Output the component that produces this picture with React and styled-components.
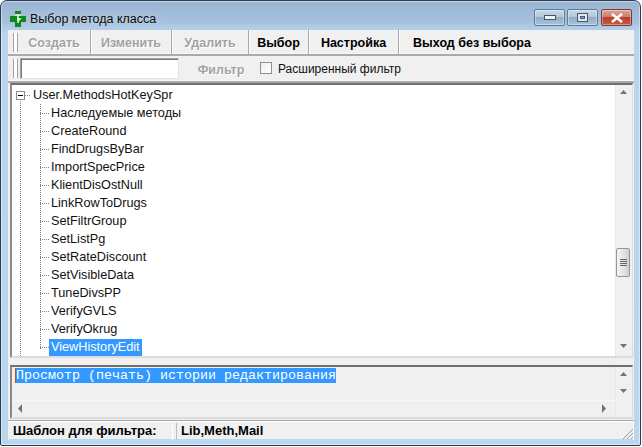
import React from "react";
import styled, { createGlobalStyle } from "styled-components";

const Global = createGlobalStyle`
  html, body { margin: 0; padding: 0; width: 642px; height: 447px; overflow: hidden; background: #fff; }
  #root { width: 642px; height: 447px; }
`;
const UI = `"Liberation Sans", Arial, sans-serif`;

const Win = styled.div`
  box-sizing: border-box; width: 641px; height: 446px; display: flex; flex-direction: column;
  border: 1px solid #2b3c4d; border-radius: 7px 7px 2px 2px;
  background: linear-gradient(180deg, #9ab5d2 0px, #a5c0dc 20px, #b9d4ec 32px, #b9d7ee 100%);
  padding: 0 6px 6px 7px; box-shadow: inset 0 0 0 1px rgba(255,255,255,.45);
  font-family: ${UI}; color: #000;
`;
const TitleBar = styled.div`
  height: 29px; flex: none; display: flex; align-items: center; padding-top: 7px; box-sizing: border-box; padding-left: 2px;
`;
const TitleText = styled.div`
  font-size: 12.5px; margin-left: 4px; flex: 1; color: #0b0b0b; text-shadow: 0 0 6px rgba(255,255,255,.6);
`;
const Ctl = styled.div`
  box-sizing: border-box; width: 31px; height: 17px; flex: none; margin-right: ${p => p.$mr}px; margin-top: -3px;
  display: flex; align-items: center; justify-content: center; border-radius: 2px;
  border: 1px solid ${p => p.$close ? "#7d3a3a" : "#5f7b96"};
  background: ${p => p.$close
    ? "linear-gradient(180deg,#e0a598 0,#cf7d6c 45%,#b8402c 50%,#c75a45 100%)"
    : "linear-gradient(180deg,#c8d8e8 0,#b2c8dc 45%,#8fadc9 50%,#a9c4dc 100%)"};
  box-shadow: inset 0 0 0 1px rgba(255,255,255,.35);
`;
const Content = styled.div`
  flex: 1; min-height: 0; display: flex; flex-direction: column; background: #f0f0f0;
`;
const Bar = styled.div`
  height: ${p => p.$h}px; flex: none; box-sizing: border-box; display: flex; align-items: center;
  background: #f0f0f0; padding-left: 5px; border-bottom: 2px solid #a9a9a9; box-shadow: inset 0 -1px 0 #f8f8f8;
`;
const Grip = styled.div`
  width: 5px; height: 19px; flex: none; margin-right: ${p => p.$mr}px; box-sizing: border-box;
  border-left: 1px solid #a0a0a0; border-right: 1px solid #a0a0a0; background: #fff;
`;
const ToolBtn = styled.div`
  box-sizing: border-box; height: 100%; width: ${p => p.$w}px; flex: none; display: flex; align-items: center; justify-content: center;
  font-size: 12.5px; font-weight: bold; padding-top: 2px;
  color: ${p => p.$off ? "#a3a3a3" : "#000"};
  text-shadow: ${p => p.$off ? "1px 1px 0 #fff" : "none"};
  border-right: ${p => p.$last ? "none" : "1px solid #a9a9a9"};
  box-shadow: ${p => p.$last ? "none" : "1px 0 0 #fafafa"};
`;
const Input = styled.div`
  width: 159px; height: 21px; box-sizing: border-box; flex: none; background: #fff; margin-right: 15px;
  border: 1px solid #a5a5a5; border-right-color: #e3e3e3; border-bottom-color: #e3e3e3; box-shadow: inset 1px 1px 0 #777;
`;
const FilterLabel = styled.div`
  font-size: 12.5px; font-weight: bold; color: #a3a3a3; text-shadow: 1px 1px 0 #fff; width: 50px; margin-left: 2px; text-align: center; margin-right: 14px; padding-top: 2px;
`;
const CheckBox = styled.div`
  width: 12px; height: 12px; flex: none; box-sizing: border-box; border: 1px solid #8e8f8f; background: linear-gradient(135deg,#eee,#fff); margin-right: 6px; margin-bottom: 2px;
`;
const CheckLabel = styled.div`
  font-size: 12px; color: #111;
`;
const Sunken = styled.div`
  display: flex; box-sizing: border-box; flex: none; height: ${p => p.$h}px; margin: ${p => p.$m}; background: ${p => p.$bg};
  border-top: 2px solid #6f6f6f; border-left: 2px solid #8a8a8a; border-right: 1px solid #dcdcdc; border-bottom: 2px solid #dcdcdc;
`;
const TreePane = styled.div`
  flex: 1; min-width: 0; padding: 1px 0 0 4px; position: relative; overflow: hidden;
`;
const Row = styled.div`
  height: 18px; display: flex; align-items: center; position: relative; font-size: 12.7px; color: #111;
`;
const Expander = styled.div`
  width: 9px; height: 9px; box-sizing: border-box; border: 1px solid #8c8c8c; flex: none; background: #fff;
  display: flex; align-items: center; justify-content: center; position: relative; z-index: 1;
  &::after { content: ""; width: 5px; height: 1px; background: #000; display: block; }
`;
const DotH = styled.div`
  width: ${p => p.$w}px; flex: none; border-top: 1px dotted #808080;
`;
const DotV = styled.div`
  position: absolute; left: ${p => p.$l}px; top: ${p => p.$t}px; height: ${p => p.$len}px; width: 0; border-left: 1px dotted #808080;
`;
const Indent = styled.div`
  display: flex; align-items: center; flex: none; padding-left: 24px;
`;
const Label = styled.div`
  padding: 1px 2px 1px 2px; line-height: 15px; background: ${p => p.$sel ? "#3399ff" : "transparent"}; color: ${p => p.$sel ? "#fff" : "#111"}; white-space: nowrap;
`;
const RootLabel = styled(Label)`
  padding-left: 3px;
`;
const VScroll = styled.div`
  width: 17px; flex: none; display: flex; flex-direction: column; background: #f0f0f0; box-shadow: inset 1px 0 0 #e8e8e8;
`;
const ArrowBox = styled.div`
  height: 17px; flex: none; display: flex; align-items: center; justify-content: center;
`;
const Spacer = styled.div` height: ${p => p.$h}px; flex: ${p => p.$h ? "none" : 1}; `;
const Thumb = styled.div`
  height: 29px; flex: none; box-sizing: border-box; margin-left: 1px; width: 14px; border: 1px solid #979797; border-radius: 2px;
  background: linear-gradient(90deg,#f4f4f4,#e6e6e6 50%,#cfcfcf); display: flex; align-items: center; justify-content: center;
`;
const MemoBody = styled.div` flex: 1; min-width: 0; display: flex; flex-direction: column; `;
const MemoText = styled.div`
  flex: 1; padding: 1px 0 0 3px; font-family: "Liberation Mono", "Courier New", monospace; font-size: 13.33px;
`;
const MemoSel = styled.span`
  background: #3399ff; color: #fff; display: inline-block; line-height: 15px; height: 15px; border-left: 1px solid #b4561c;
`;
const HScroll = styled.div`
  height: 17px; flex: none; display: flex; align-items: center; justify-content: space-between; padding: 0 5px; box-shadow: inset 0 1px 0 #f8f8f8;
`;
const Status = styled.div`
  flex: 1; display: flex; border-top: 1px solid #a9a9a9; box-shadow: inset 0 1px 0 #fff; position: relative; padding-top: 2px; gap: 3px;
`;
const Panel = styled.div`
  width: ${p => p.$w ? p.$w + "px" : "auto"}; flex: ${p => p.$w ? "none" : 1}; box-sizing: border-box; font-size: 13px; font-weight: bold;
  display: flex; align-items: center; padding-left: 5px; padding-bottom: 2px; box-shadow: inset -1px 0 0 #fff, inset 1px 0 0 ${p => p.$w ? "#f0f0f0" : "#bdbdbd"};
  color: #000;
`;
const Resize = styled.svg`
  position: absolute; right: 0; bottom: 0;
`;

const Arrow = ({ dir }) => {
  const pts = { up: "1,5 8,5 4.5,1", down: "1,1 8,1 4.5,5", left: "5,0 5,9 1,4.5", right: "1,0 1,9 5,4.5" }[dir];
  return <svg width="9" height="9" viewBox="0 0 9 9"><polygon points={pts} fill="#555" opacity=".8" /></svg>;
};

const items = ["Наследуемые методы","CreateRound","FindDrugsByBar","ImportSpecPrice","KlientDisOstNull","LinkRowToDrugs","SetFiltrGroup","SetListPg","SetRateDiscount","SetVisibleData","TuneDivsPP","VerifyGVLS","VerifyOkrug","ViewHistoryEdit"];

export default function App() {
  return (
    <Win>
      <Global />
      <TitleBar>
        <svg width="16" height="16" viewBox="0 0 16 16">
          <path d="M5 0h6v5h5v6h-5v5H5v-5H0V5h5z" fill="#0c8a1c" />
          <path d="M5 4h6M8 4v8M7 8h3L8 10" stroke="#fff" strokeWidth="1.4" fill="none" />
        </svg>
        <TitleText>Выбор метода класса</TitleText>
        <Ctl $mr={2}><svg width="12" height="6"><rect x=".5" y=".5" width="11" height="4" fill="#eef3f8" stroke="#44586c" /></svg></Ctl>
        <Ctl $mr={3}><svg width="12" height="10"><rect x=".5" y=".5" width="10" height="8" fill="#dfe8f0" stroke="#44586c" /><rect x="3.5" y="3.5" width="4" height="2" fill="#8fadc9" stroke="#44586c" /></svg></Ctl>
        <Ctl $mr={2} $close><svg width="14" height="10"><path d="M2 1l10 8M12 1L2 9" stroke="#fff" strokeWidth="2.6" /></svg></Ctl>
      </TitleBar>
      <Content>
        <Bar $h={26}>
          <Grip $mr={0} />
          <ToolBtn $off $w={73}>Создать</ToolBtn>
          <ToolBtn $off $w={81}>Изменить</ToolBtn>
          <ToolBtn $off $w={77}>Удалить</ToolBtn>
          <ToolBtn $w={60}>Выбор</ToolBtn>
          <ToolBtn $w={90}>Настройка</ToolBtn>
          <ToolBtn $last $w={146}>Выход без выбора</ToolBtn>
        </Bar>
        <Bar $h={27}>
          <Grip $mr={2} />
          <Input />
          <FilterLabel>Фильтр</FilterLabel>
          <CheckBox />
          <CheckLabel>Расширенный фильтр</CheckLabel>
        </Bar>
        <Sunken $h={275} $m="0 1px 0 2px" $bg="#fff">
          <TreePane>
            <DotV $l={8} $t={13} $len={260} />
            <DotV $l={28} $t={19} $len={245} />
            <Row>
              <Expander /><DotH $w={5} />
              <RootLabel>User.MethodsHotKeySpr</RootLabel>
            </Row>
            {items.map((t, i) => (
              <Row key={t}>
                <Indent><DotH $w={9} /></Indent>
                <Label $sel={i === items.length - 1}>{t}</Label>
              </Row>
            ))}
          </TreePane>
          <VScroll>
            <ArrowBox><Arrow dir="up" /></ArrowBox>
            <Spacer $h={146} />
            <Thumb><svg width="7" height="8"><path d="M0 .5h7M0 2.5h7M0 4.5h7M0 6.5h7" stroke="#666" /></svg></Thumb>
            <Spacer />
            <ArrowBox><Arrow dir="down" /></ArrowBox>
          </VScroll>
        </Sunken>
        <Sunken $h={54} $m="7px 1px 1px 2px" $bg="#f0f0f0">
          <MemoBody>
            <MemoText><MemoSel>Просмотр (печать) истории редактирования</MemoSel></MemoText>
            <HScroll><Arrow dir="left" /><Arrow dir="right" /></HScroll>
          </MemoBody>
          <VScroll>
            <ArrowBox><Arrow dir="up" /></ArrowBox>
            <ArrowBox><Arrow dir="down" /></ArrowBox>
            <Spacer />
          </VScroll>
        </Sunken>
        <Status>
          <Panel $w={165}>Шаблон для фильтра:</Panel>
          <Panel>Lib,Meth,Mail</Panel>
          <Resize width="12" height="12" viewBox="0 0 12 12"><path d="M11 1L1 11M11 5L5 11M11 9L9 11" stroke="#9a9a9a" /></Resize>
        </Status>
      </Content>
    </Win>
  );
}
